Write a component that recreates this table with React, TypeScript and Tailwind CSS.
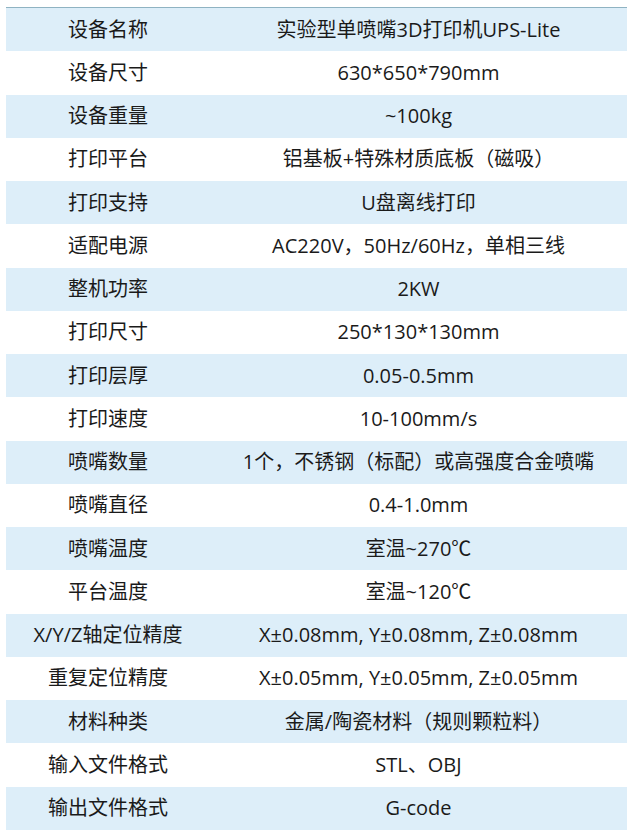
import React from "react";

const rows: [string, string][] = [
  ["设备名称", "实验型单喷嘴3D打印机UPS-Lite"],
  ["设备尺寸", "630*650*790mm"],
  ["设备重量", "~100kg"],
  ["打印平台", "铝基板+特殊材质底板（磁吸）"],
  ["打印支持", "U盘离线打印"],
  ["适配电源", "AC220V，50Hz/60Hz，单相三线"],
  ["整机功率", "2KW"],
  ["打印尺寸", "250*130*130mm"],
  ["打印层厚", "0.05-0.5mm"],
  ["打印速度", "10-100mm/s"],
  ["喷嘴数量", "1个，不锈钢（标配）或高强度合金喷嘴"],
  ["喷嘴直径", "0.4-1.0mm"],
  ["喷嘴温度", "室温~270℃"],
  ["平台温度", "室温~120℃"],
  ["X/Y/Z轴定位精度", "X±0.08mm, Y±0.08mm, Z±0.08mm"],
  ["重复定位精度", "X±0.05mm, Y±0.05mm, Z±0.05mm"],
  ["材料种类", "金属/陶瓷材料（规则颗粒料）"],
  ["输入文件格式", "STL、OBJ"],
  ["输出文件格式", "G-code"],
];

export default function App() {
  return (
    <div
      className="w-[631px] h-[831px] bg-white pt-[7px] pl-[6px] pr-[4px]"
      style={{ fontFamily: '"Open Sans", "Noto Sans CJK SC", sans-serif' }}
    >
      <div className="border-t border-[#8fb3c2]">
        {rows.map(([k, v], i) => (
          <div
            key={k}
            className={`flex h-[43.26px] items-center text-[20px] text-[#1a1a1a] ${
              i % 2 === 0 ? "bg-[#ddeef9]" : "bg-white"
            }`}
          >
            <div className="w-[204px] text-center">{k}</div>
            <div className="flex-1 text-center">{v}</div>
          </div>
        ))}
      </div>
    </div>
  );
}
